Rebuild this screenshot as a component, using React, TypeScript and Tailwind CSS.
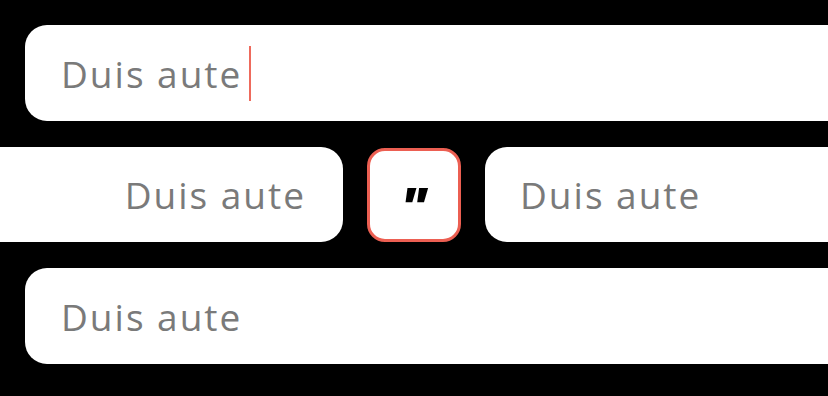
export default function App() {
  const font = { fontFamily: '"Open Sans", "Noto Sans", sans-serif' }
  return (
    <div className="w-[828px] h-[396px] bg-black overflow-hidden flex flex-col gap-[26px] pt-[25px]" style={font}>
      {/* Top field, focused */}
      <div className="ml-[25px] w-[840px] h-[96px] shrink-0 rounded-[22px] bg-white flex items-center pl-[36px]">
        <span className="text-[37px] leading-none text-[#7a7a7a] tracking-[2px]">Duis aute</span>
        <span className="ml-[7px] w-[2px] h-[55px] bg-[#ee6a5c]"></span>
      </div>

      {/* Middle row */}
      <div className="flex items-center h-[95px] shrink-0">
        <div className="-ml-[26px] w-[369px] h-[95px] shrink-0 rounded-[22px] bg-white flex items-center justify-end pr-[37px]">
          <span className="text-[37px] leading-none text-[#7a7a7a] tracking-[2px]">Duis aute</span>
        </div>
        <button className="ml-[24px] w-[94px] h-[94px] shrink-0 rounded-[18px] border-[3px] border-[#ec5f52] bg-white flex items-center justify-center">
          <span className="text-[54px] font-black italic text-black leading-none mt-[22px] -ml-[2px]">"</span>
        </button>
        <div className="ml-[24px] w-[400px] h-[95px] shrink-0 rounded-[22px] bg-white flex items-center pl-[35px]">
          <span className="text-[37px] leading-none text-[#7a7a7a] tracking-[2px]">Duis aute</span>
        </div>
      </div>

      {/* Bottom field */}
      <div className="ml-[25px] w-[840px] h-[96px] shrink-0 rounded-[22px] bg-white flex items-center pl-[36px]">
        <span className="text-[37px] leading-none text-[#7a7a7a] tracking-[2px]">Duis aute</span>
      </div>
    </div>
  )
}
